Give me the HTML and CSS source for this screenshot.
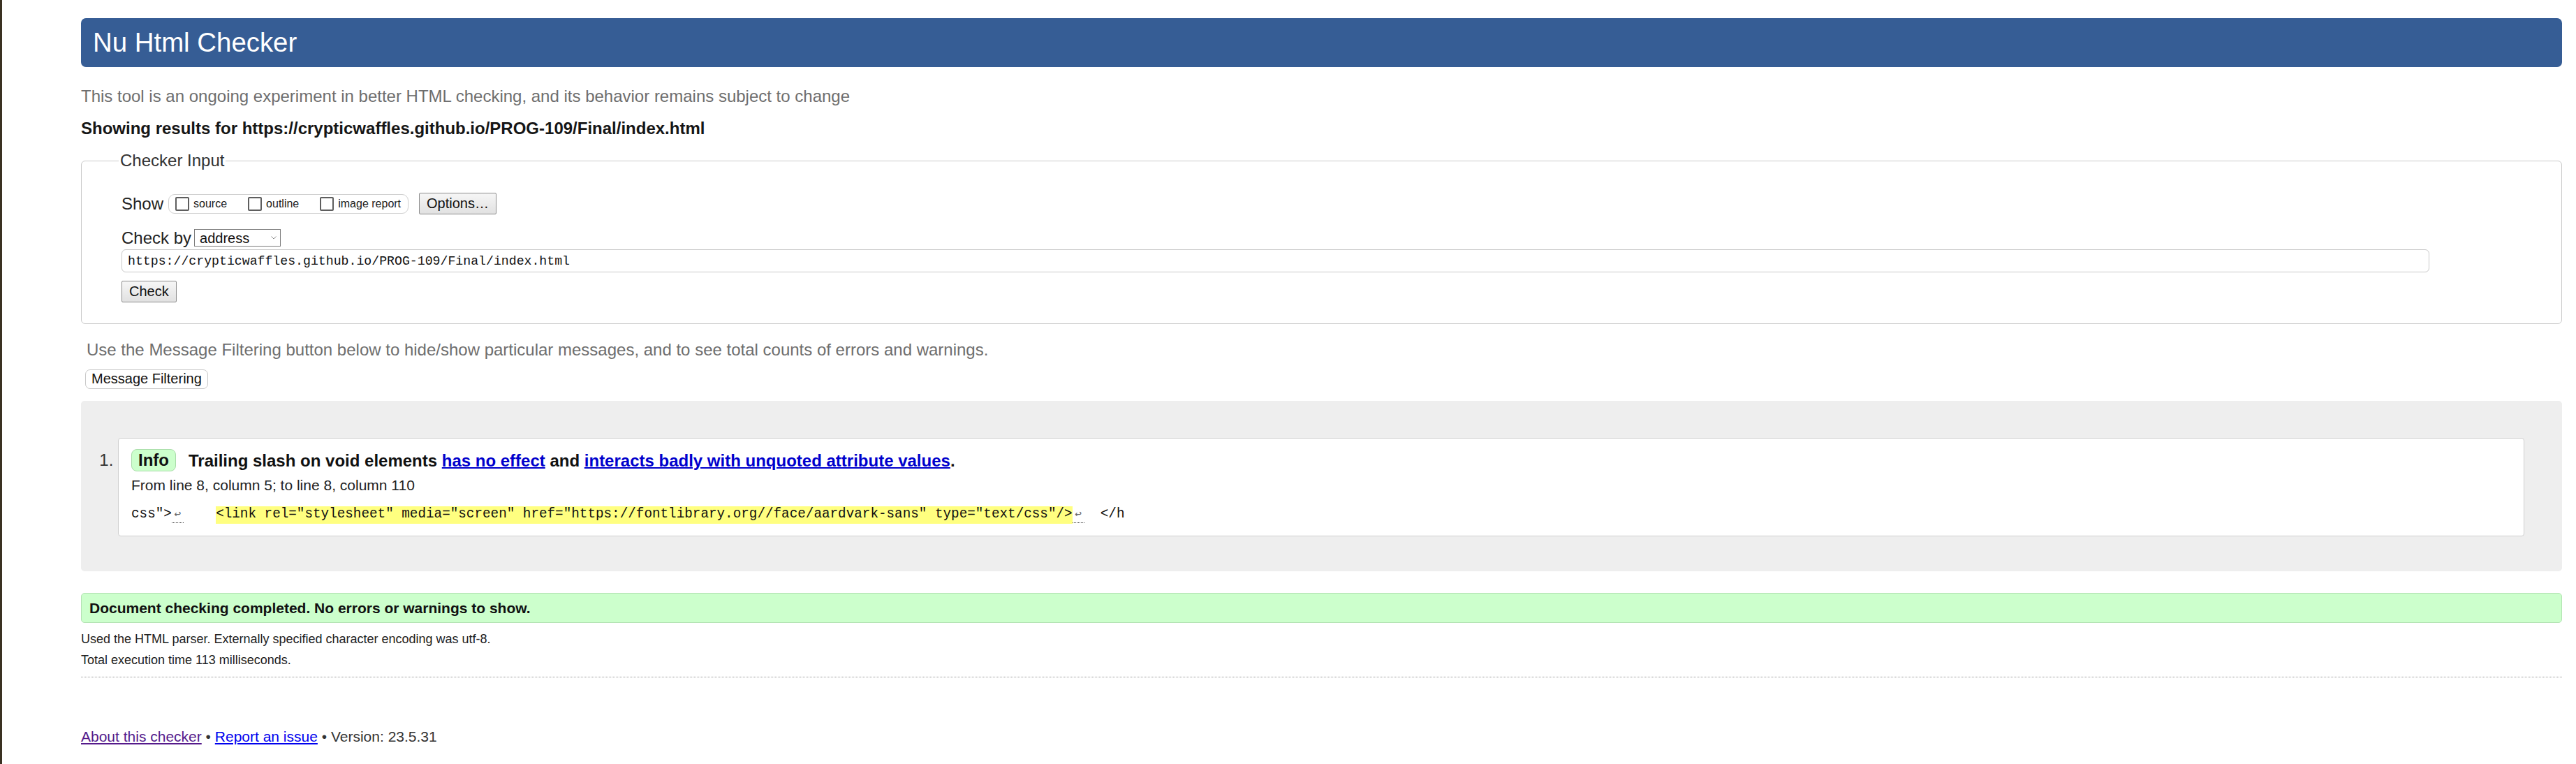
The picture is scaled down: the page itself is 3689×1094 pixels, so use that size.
FILE: index.html
```html
<!DOCTYPE html>
<html lang="en">
<head>
<meta charset="utf-8">
<title>Showing results for https://crypticwaffles.github.io/PROG-109/Final/index.html - Nu Html Checker</title>
<link rel="stylesheet" href="styles.css">
</head>
<body>
<h1 class="title">Nu Html Checker</h1>
<p class="intro">This tool is an ongoing experiment in better HTML checking, and its behavior remains subject to change</p>
<p class="showing">Showing results for https://crypticwaffles.github.io/PROG-109/Final/index.html</p>

<form class="checker">
  <fieldset class="input-set">
    <legend class="legend">Checker Input</legend>
    <div class="row show-row">
      <span class="show-label">Show</span>
      <span class="show-group">
        <label class="opt"><input type="checkbox">source</label>
        <label class="opt"><input type="checkbox">outline</label>
        <label class="opt"><input type="checkbox">image report</label>
      </span>
      <button type="button" class="btn options">Options…</button>
    </div>
    <div class="row by-row">
      <span class="by-label">Check by</span>
      <span class="select-wrap">
        <select class="select"><option>address</option></select>
        <svg class="chev" viewBox="0 0 8 5" aria-hidden="true"><path d="M0.5 0.5 L4 4 L7.5 0.5" fill="none" stroke="#8a8a8a" stroke-width="1"/></svg>
      </span>
    </div>
    <input class="url" type="text" value="https://crypticwaffles.github.io/PROG-109/Final/index.html">
    <button type="button" class="btn check">Check</button>
  </fieldset>
</form>

<p class="filter-note">Use the Message Filtering button below to hide/show particular messages, and to see total counts of errors and warnings.</p>
<button type="button" class="filter-btn">Message Filtering</button>

<div class="results">
  <ol class="messages">
    <li class="msg">
      <p class="msg-title"><span class="badge">Info</span><span class="msg-text">Trailing slash on void elements <a class="msg-link" href="#">has no effect</a> and <a class="msg-link" href="#">interacts badly with unquoted attribute values</a>.</span></p>
      <p class="location">From line 8, column 5; to line 8, column 110</p>
      <p class="extract">css"&gt;<span class="lf">↩</span>    <mark class="hl">&lt;link rel="stylesheet" media="screen" href="https://fontlibrary.org//face/aardvark-sans" type="text/css"/&gt;</mark><span class="lf">↩</span>  &lt;/h</p>
    </li>
  </ol>
</div>

<p class="status">Document checking completed. No errors or warnings to show.</p>
<p class="meta meta-first">Used the HTML parser. Externally specified character encoding was utf-8.</p>
<p class="meta meta-second">Total execution time 113 milliseconds.</p>
<hr class="rule">
<p class="footer"><a class="visited" href="#">About this checker</a> • <a class="link" href="#">Report an issue</a> • Version: 23.5.31</p>
</body>
</html>
```
FILE: styles.css
```css
html {
  background: #ffffff;
}

body {
  margin: 0;
  padding: 26px 20px 20px 113px;
  border-left: 3px solid #3a3122;
  font-family: "Liberation Sans", Arial, sans-serif;
  font-size: 24px;
  color: #222222;
  min-height: 1094px;
  box-sizing: border-box;
}

.title {
  margin: 0;
  background: #365d95;
  color: #ffffff;
  font-weight: normal;
  font-size: 38.4px;
  line-height: 44px;
  padding: 13px 17px;
  border-radius: 7px;
}

.intro {
  margin: 28px 0 0;
  line-height: 28px;
  color: #6e6e6e;
}

.showing {
  margin: 18px 0 0;
  line-height: 28px;
  font-weight: bold;
  color: #161616;
}

.checker {
  margin: 18px 0 0;
}

.input-set {
  margin: 0;
  padding: 32px 57px 30px;
  border: 1px solid #cacaca;
  border-radius: 6px;
  min-width: 0;
}

.legend {
  padding: 0 2px;
  margin-left: -4px;
  font-size: 24px;
  line-height: 28px;
  color: #333333;
}

.row {
  display: flex;
  align-items: center;
}

.show-row {
  height: 31px;
}

.show-label {
  margin-right: 7px;
}

.show-group {
  display: flex;
  align-items: center;
  gap: 30px;
  height: 28px;
  box-sizing: border-box;
  border: 1px solid #d0d0d0;
  border-radius: 9px;
  padding: 0 10px 0 9px;
}

.opt {
  display: flex;
  align-items: center;
  gap: 6px;
  font-size: 16px;
  color: #222222;
}

.opt input {
  appearance: none;
  -webkit-appearance: none;
  margin: 0;
  width: 20px;
  height: 20px;
  border: 2px solid #5e5e5e;
  border-radius: 2px;
  background: #ffffff;
}

.btn {
  font-family: "Liberation Sans", Arial, sans-serif;
  font-size: 20px;
  color: #111111;
  background: linear-gradient(#f6f6f6, #e1e1e1);
  border: 1px solid #8c8c8c;
  border-radius: 2px;
  padding: 0 10px;
  height: 31px;
}

.options {
  margin-left: 15px;
}

.by-row {
  margin-top: 19.5px;
  height: 28px;
  gap: 4px;
}

.select-wrap {
  position: relative;
  display: inline-block;
  height: 25px;
}

.select {
  appearance: none;
  -webkit-appearance: none;
  display: block;
  width: 124px;
  height: 25px;
  margin: 0;
  border: 1px solid #7a7a7a;
  border-radius: 0;
  background: #ffffff;
  font-family: "Liberation Sans", Arial, sans-serif;
  font-size: 20px;
  padding: 0 0 0 7px;
  color: #111111;
}

.chev {
  position: absolute;
  right: 6px;
  top: 10px;
  width: 8px;
  height: 5px;
  pointer-events: none;
}

.url {
  display: block;
  margin: 2.5px 0 0;
  width: calc(100% - 132px);
  height: 33px;
  box-sizing: border-box;
  border: 1px solid #c8c8c8;
  border-radius: 6px;
  padding: 0 8px;
  font-family: "Liberation Mono", "DejaVu Sans Mono", monospace;
  font-size: 18.2px;
  color: #111111;
  background: #ffffff;
}

.check {
  display: block;
  margin-top: 12px;
}

.filter-note {
  margin: 22.7px 0 0 8px;
  line-height: 28px;
  color: #6e6e6e;
}

.filter-btn {
  display: block;
  margin: 14.3px 0 0 6px;
  height: 28px;
  font-family: "Liberation Sans", Arial, sans-serif;
  font-size: 20px;
  color: #111111;
  background: #ffffff;
  border: 1px solid #c8c8c8;
  border-radius: 7px;
  padding: 0 8px;
}

.results {
  margin-top: 17px;
  background: #eeeeee;
  border-radius: 5px;
  padding: 53px 54px 50px 0;
}

.messages {
  margin: 0;
  padding-left: 53px;
}

.msg {
  background: #ffffff;
  border: 1px solid #cfcfcf;
  border-radius: 4px;
  padding: 15px 18px 17px;
}

.msg::marker {
  color: #333333;
}

.msg-title {
  margin: 0;
  line-height: 28px;
}

.badge {
  display: inline-block;
  padding: 1.5px 9px;
  line-height: 27px;
  border: 1px solid #a9dca9;
  background: #ccffcc;
  border-radius: 8px;
  font-weight: bold;
  color: #111111;
  margin-right: 18px;
}

.msg-text {
  font-weight: bold;
  color: #111111;
}

.msg-link {
  color: #0000cc;
  text-decoration: underline;
}

.location {
  margin: 8px 0 0;
  font-size: 21px;
  line-height: 24px;
  color: #222222;
}

.extract {
  margin: 15px 0 0;
  line-height: 28px;
  font-family: "Liberation Mono", "DejaVu Sans Mono", monospace;
  font-size: 19.3px;
  white-space: pre;
  color: #111111;
}

.lf {
  display: inline-block;
  width: 17px;
  text-align: center;
  line-height: 19px;
  padding-bottom: 3px;
  border-bottom: 1px dotted #444444;
  color: #666666;
  font-family: "DejaVu Sans Mono", monospace;
  font-size: 16px;
}

.hl {
  background: #ffff80;
  color: #111111;
  padding: 0 0 3px;
}

.status {
  margin: 31px 0 0;
  height: 43px;
  box-sizing: border-box;
  background: #ccffcc;
  border: 1px solid #b2e2b2;
  border-radius: 5px;
  padding: 0 11px;
  line-height: 41px;
  font-weight: bold;
  font-size: 21px;
  color: #111111;
}

.meta {
  margin: 0;
  font-size: 18px;
  line-height: 22px;
  color: #222222;
}

.meta-first {
  margin-top: 12px;
}

.meta-second {
  margin-top: 8px;
}

.rule {
  margin: 13px 0 0;
  border: 0;
  border-top: 1px dotted #9a9a9a;
  height: 0;
}

.footer {
  margin: 73px 0 0;
  font-size: 21px;
  line-height: 24px;
  color: #333333;
}

.visited {
  color: #551a8b;
}

.link {
  color: #0000ee;
}
```
